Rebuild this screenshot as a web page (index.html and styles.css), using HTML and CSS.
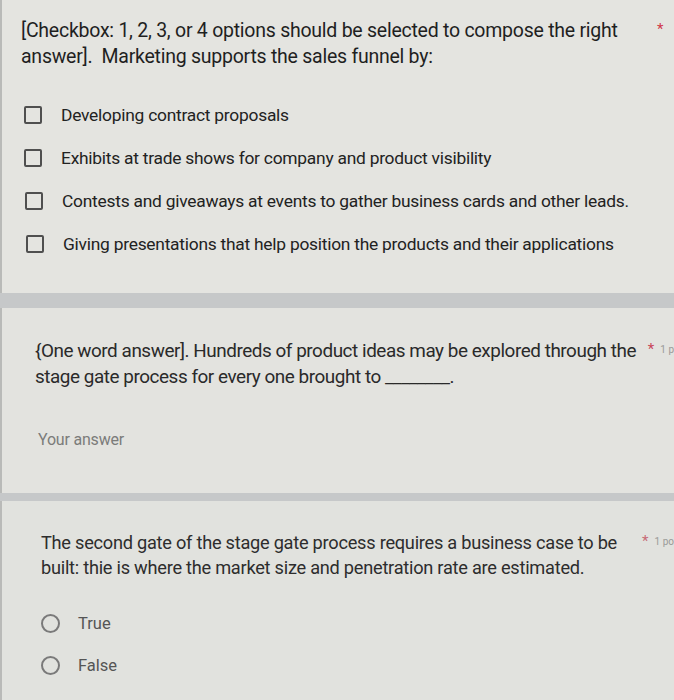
FILE: index.html
```html
<!DOCTYPE html>
<html>
<head>
<meta charset="utf-8">
<link rel="stylesheet" href="styles.css">
</head>
<body>
<div class="page">
  <section class="card card-1">
    <div class="q-head">
      <div class="q-title">[Checkbox: 1, 2, 3, or 4 options should be selected to compose the right answer]. &nbsp;Marketing supports the sales funnel by:</div>
      <span class="req">*</span>
    </div>
    <ul class="options">
      <li class="opt"><span class="box"></span><span class="opt-text">Developing contract proposals</span></li>
      <li class="opt"><span class="box"></span><span class="opt-text">Exhibits at trade shows for company and product visibility</span></li>
      <li class="opt o3"><span class="box"></span><span class="opt-text">Contests and giveaways at events to gather business cards and other leads.</span></li>
      <li class="opt o4"><span class="box"></span><span class="opt-text">Giving presentations that help position the products and their applications</span></li>
    </ul>
  </section>

  <section class="card card-2">
    <div class="q-head">
      <div class="q-title">{One word answer]. Hundreds of product ideas may be explored through the stage gate process for every one brought to ________.</div>
      <span class="req">*</span><span class="pts">1 p</span>
    </div>
    <div class="answer">Your answer</div>
  </section>

  <section class="card card-3">
    <div class="q-head">
      <div class="q-title">The second gate of the stage gate process requires a business case to be built: thie is where the market size and penetration rate are estimated.</div>
      <span class="req">*</span><span class="pts">1 po</span>
    </div>
    <ul class="radios">
      <li class="radio"><span class="circle"></span><span class="r-text">True</span></li>
      <li class="radio"><span class="circle"></span><span class="r-text">False</span></li>
    </ul>
  </section>
</div>
</body>
</html>
```

FILE: styles.css
```css
* { box-sizing: border-box; }
html, body { margin: 0; padding: 0; }
body {
  width: 674px;
  height: 700px;
  overflow: hidden;
  background: #c6c8c9;
  font-family: Roboto, "Liberation Sans", Arial, sans-serif;
  color: #232323;
}
.page {
  display: flex;
  flex-direction: column;
  gap: 15px;
}
.card {
  background: #e4e4e0;
  border-left: 2px solid #b9bab8;
}
.card-1 {
  height: 293px;
  padding: 18px 0 0 19px;
}
.card-2 {
  height: 185px;
  padding: 30px 0 0 33px;
  background: #e3e3df;
}
.card-3 {
  height: 199px;
  padding: 29px 0 0 39px;
  margin-top: -7px;
  background: #e1e2de;
}
.q-head {
  display: flex;
  align-items: flex-start;
}
.q-title {
  font-size: 19.5px;
  line-height: 26px;
  letter-spacing: -0.25px;
  color: #1f1f1f;
}
.card-1 .q-title { width: 616px; }
.card-2 .q-title { width: 614px; font-size: 18.9px; letter-spacing: -0.45px; color: #2a2a2a; }
.card-3 .q-title { width: 590px; font-size: 18.2px; color: #2d2d2d; line-height: 25px; }
.req {
  color: #d0384a;
  font-size: 15px;
  margin-left: 20px;
  line-height: 22px;
}
.card-2 .req { margin-left: 0; color: #c9465a; }
.card-2 .pts, .card-3 .pts {
  color: #9a9a98;
  font-size: 10px;
  margin-left: 6px;
  line-height: 24px;
  white-space: nowrap;
}
.card-3 .req { margin-left: 12px; color: #c76a76; }
.options {
  list-style: none;
  margin: 33px 0 0 0;
  padding: 0 0 0 3px;
  display: flex;
  flex-direction: column;
  gap: 20px;
}
.opt {
  display: flex;
  align-items: center;
  gap: 19px;
  height: 23px;
}
.opt.o3 { padding-left: 1px; }
.opt.o4 { padding-left: 2px; }
.box {
  width: 18px;
  height: 18px;
  border: 2px solid #4f4f4f;
  border-radius: 2px;
  flex: none;
}
.opt-text {
  font-size: 17.4px;
  letter-spacing: -0.25px;
  color: #222;
}
.answer {
  margin-top: 40px;
  margin-left: 3px;
  font-size: 16px;
  color: #7b7c7a;
  letter-spacing: -0.2px;
}
.radios {
  list-style: none;
  margin: 33px 0 0 0;
  padding: 0;
  display: flex;
  flex-direction: column;
  gap: 22px;
}
.radio {
  display: flex;
  align-items: center;
  gap: 18px;
  height: 20px;
}
.circle {
  width: 19px;
  height: 19px;
  border: 2px solid #7a7a7a;
  border-radius: 50%;
  flex: none;
}
.r-text {
  font-size: 16.5px;
  color: #555;
}
```
